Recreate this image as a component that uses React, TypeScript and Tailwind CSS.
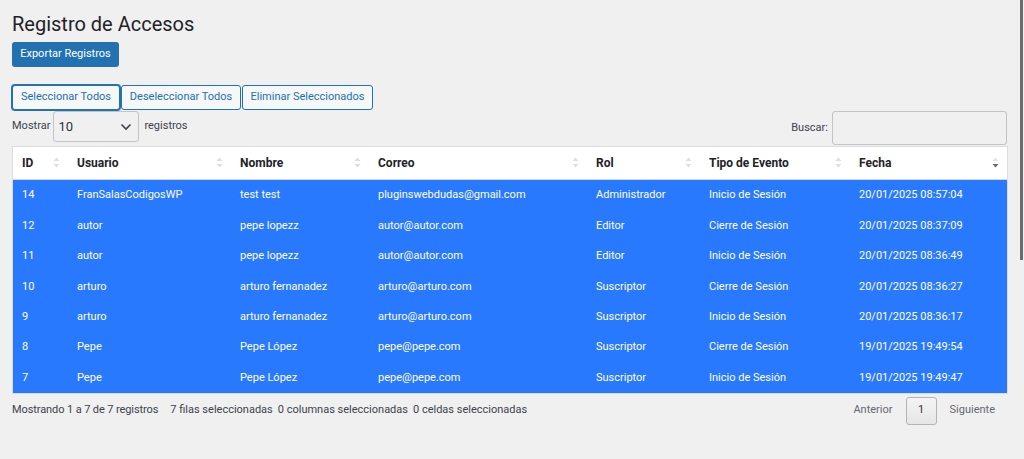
import React from "react";

const rows: string[][] = [
  ["14", "FranSalasCodigosWP", "test test", "pluginswebdudas@gmail.com", "Administrador", "Inicio de Sesión", "20/01/2025 08:57:04"],
  ["12", "autor", "pepe lopezz", "autor@autor.com", "Editor", "Cierre de Sesión", "20/01/2025 08:37:09"],
  ["11", "autor", "pepe lopezz", "autor@autor.com", "Editor", "Inicio de Sesión", "20/01/2025 08:36:49"],
  ["10", "arturo", "arturo fernanadez", "arturo@arturo.com", "Suscriptor", "Cierre de Sesión", "20/01/2025 08:36:27"],
  ["9", "arturo", "arturo fernanadez", "arturo@arturo.com", "Suscriptor", "Inicio de Sesión", "20/01/2025 08:36:17"],
  ["8", "Pepe", "Pepe López", "pepe@pepe.com", "Suscriptor", "Cierre de Sesión", "19/01/2025 19:49:54"],
  ["7", "Pepe", "Pepe López", "pepe@pepe.com", "Suscriptor", "Inicio de Sesión", "19/01/2025 19:49:47"],
];

const headers = ["ID", "Usuario", "Nombre", "Correo", "Rol", "Tipo de Evento", "Fecha"];

function SortIcon({ desc }: { desc?: boolean }) {
  return (
    <svg width="7" height="11" viewBox="0 0 7 11" className="shrink-0">
      <path d="M3.5 0.5 L6.5 4 L0.5 4 Z" fill={desc ? "#e3e3e3" : "#dedede"} />
      <path d="M0.5 7 L6.5 7 L3.5 10.5 Z" fill={desc ? "#6b6b6b" : "#dedede"} />
    </svg>
  );
}

export default function App() {
  const grid = "grid grid-cols-[55px_163px_138px_218px_113px_150px_157px]";
  return (
    <div className="relative w-[1024px] h-[459px] overflow-hidden bg-[#f0f0f1] font-['Roboto',sans-serif] text-[#3c434a]">
      <div className="px-3 pt-[10px]">
        <h1 className="text-[20px] leading-[28px] text-[#1d2327] font-normal">Registro de Accesos</h1>
        <button className="mt-[4px] h-[25px] w-[107px] rounded-[3px] bg-[#2271b1] text-white text-[11px] flex items-center justify-center">
          Exportar Registros
        </button>
        <div className="mt-[18px] flex h-[25px]">
          <button className="w-[108px] h-[25px] rounded-[3px] border border-[#2271b1] shadow-[0_0_0_1px_#2271b1] bg-[#f6f7f7] text-[#2271b1] text-[11px] flex items-center justify-center">
            Seleccionar Todos
          </button>
          <button className="ml-[1px] w-[120px] h-[25px] rounded-[3px] border border-[#2271b1] bg-[#f6f7f7] text-[#2271b1] text-[11px] flex items-center justify-center">
            Deseleccionar Todos
          </button>
          <button className="ml-[1px] w-[131px] h-[25px] rounded-[3px] border border-[#2271b1] bg-[#f6f7f7] text-[#2271b1] text-[11px] flex items-center justify-center">
            Eliminar Seleccionados
          </button>
        </div>
        <div className="mt-[1px] flex items-start justify-between h-[35px]">
          <div className="flex items-start">
            <span className="text-[11px] mt-[7px]">Mostrar</span>
            <div className="ml-[3px] w-[86px] h-[31px] rounded-[3px] border border-[#c3c4c7] flex items-center justify-between pl-[4px] pr-[6px]">
              <span className="text-[13px] text-[#2c3338]">10</span>
              <svg width="12" height="8" viewBox="0 0 12 8">
                <path d="M1.5 1.5 L6 6 L10.5 1.5" stroke="#3c434a" strokeWidth="1.6" fill="none" />
              </svg>
            </div>
            <span className="text-[11px] mt-[7px] ml-[5px]">registros</span>
          </div>
          <div className="flex items-center mr-[5px]">
            <span className="text-[11px] mr-[4px]">Buscar:</span>
            <div className="w-[175px] h-[34px] rounded-[3px] border border-[#c3c4c7]" />
          </div>
        </div>
        <div className="w-[996px] border border-[#dcdcde] bg-white">
          <div className={`${grid} h-[33px] border-b border-[#d6d6d6] items-center`}>
            {headers.map((h, i) => (
              <div key={h} className="flex items-center justify-between pl-[9px] pr-[8px] pb-[1px]">
                <span className="text-[12px] font-bold text-[#1d2327]">{h}</span>
                <SortIcon desc={i === 6} />
              </div>
            ))}
          </div>
          {rows.map((r, ri) => (
            <div key={ri} className={`${grid} h-[30.4px] items-center bg-[#2979ff] text-white text-[11px]`}>
              {r.map((c, ci) => (
                <div key={ci} className="pl-[9px] pt-[1px] whitespace-nowrap">{c}</div>
              ))}
            </div>
          ))}
        </div>
        <div className="mt-[3px] flex items-center justify-between h-[28px]">
          <div className="text-[11px] flex">
            <span className="tracking-[-0.1px]">Mostrando 1 a 7 de 7 registros</span>
            <span className="ml-[12px]">7 filas seleccionadas</span>
            <span className="ml-[5px]">0 columnas seleccionadas</span>
            <span className="ml-[5px]">0 celdas seleccionadas</span>
          </div>
          <div className="flex items-center text-[11px] text-[#646970] mr-[17px]">
            <span>Anterior</span>
            <div className="ml-[13px] w-[31px] h-[28px] rounded-[3px] border border-[#b4b4b4] bg-gradient-to-b from-[#f4f4f4] to-[#e6e6e6] flex items-center justify-center text-[#333]">1</div>
            <span className="ml-[13px]">Siguiente</span>
          </div>
        </div>
      </div>
      <div className="absolute right-[1px] top-0 w-[3px] h-[260px] bg-[#6b6b6b]" />
    </div>
  );
}
